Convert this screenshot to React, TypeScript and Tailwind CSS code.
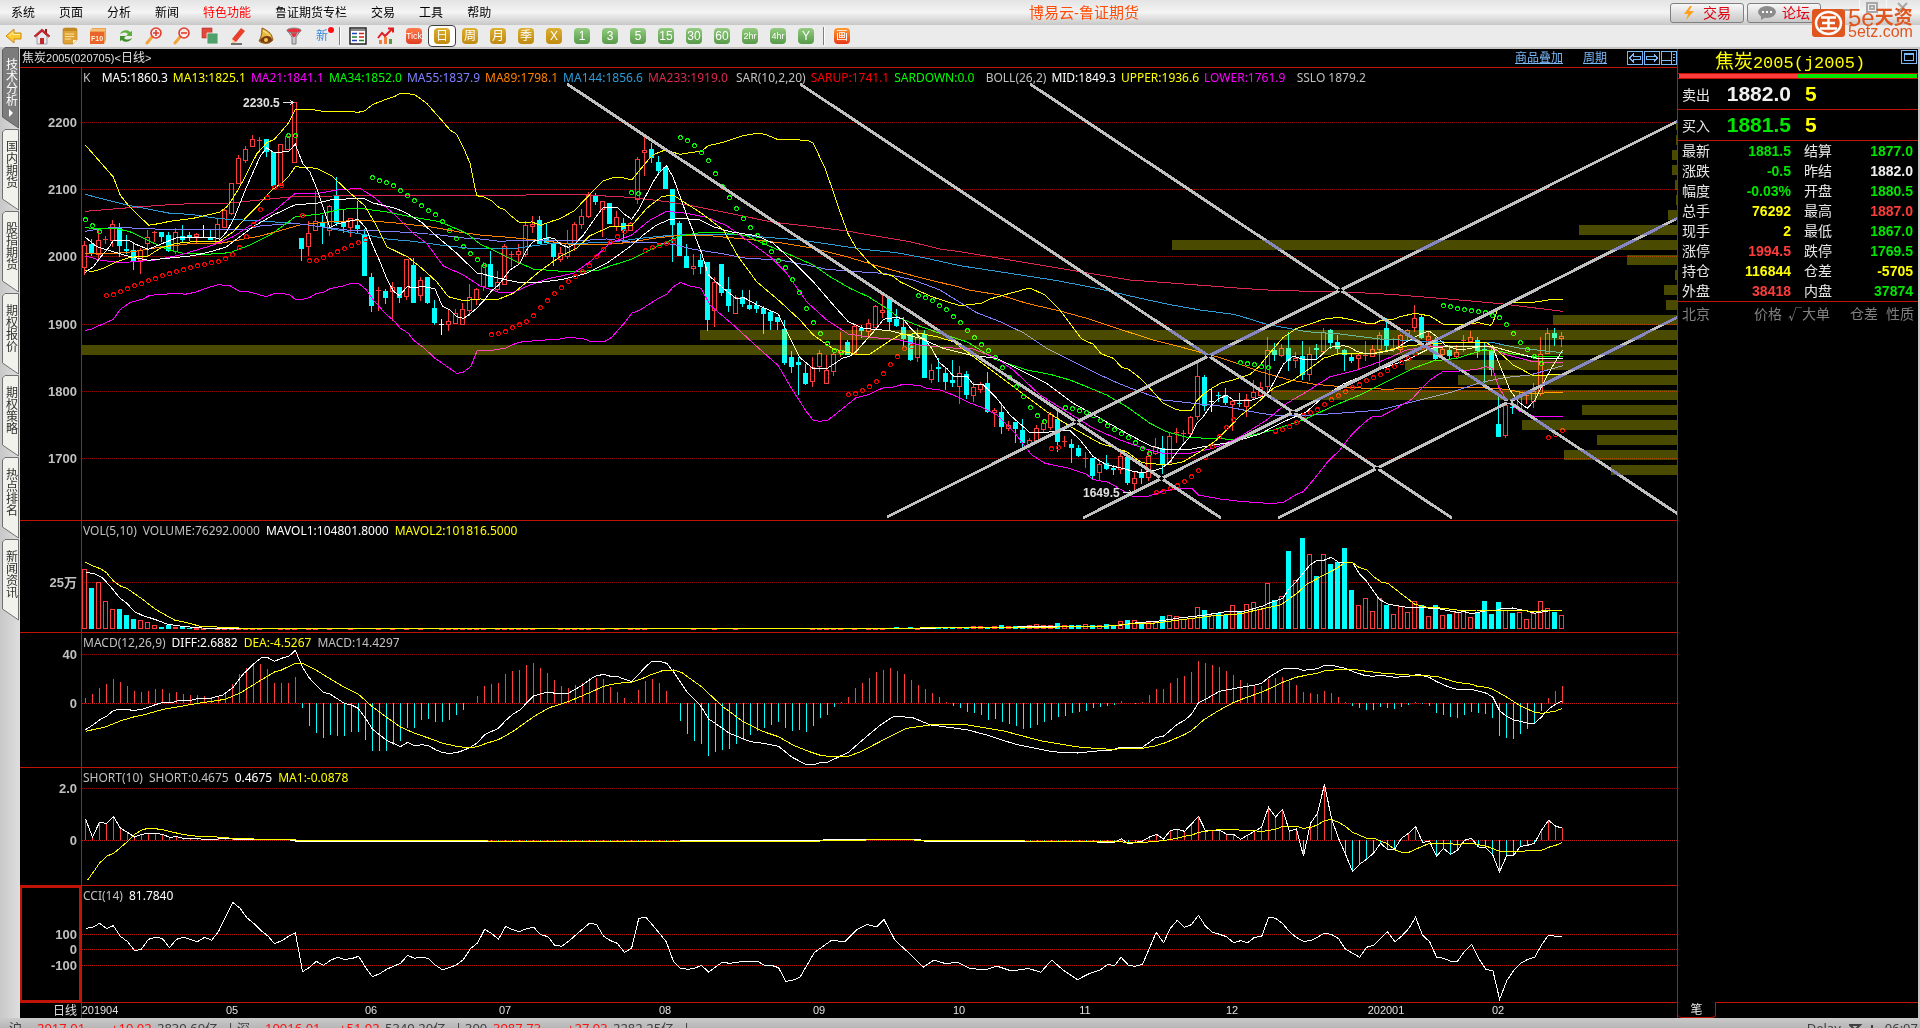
import React from 'react';
import clsx from 'clsx';

type Frame = [number, number, number, number];
type Slice = [Frame, string];

// Series are stored in slices, each with its own origin and scale: [x0, y0, x scale, y scale]
const A: Frame = [80, 80, 3, 3];
const B: Frame = [480, 80, 3, 3];
const C: Frame = [900, 280, 3, 3];
const D: Frame = [1240, 280, 3, 3];
const P: Frame = [80, 520, 1.96, 3];
const O: Frame = [0, 0, 0.8167, 0.8167];
const Q: Frame = [1100, 520, 2.703, 3];
const R: Frame = [0, 880, 1.96, 3];

const PLOT_LEFT = 82;
const STEP = 7;

const trace = (slices: Slice[]) =>
  slices
    .flatMap(([[ox, oy, sx, sy], text]) =>
      text.split(' ').map((pair) => {
        const [x, y] = pair.split(',').map(Number);
        return `${(ox + x / sx).toFixed(1)},${(oy + y / sy).toFixed(1)}`;
      }),
    )
    .join(' ');

// kind high top bottom low
const candleSlices: [Frame, string][] = [
  [
    A,
    'r 483 496 562 585|c 478 492 521 527|r 443 479 521 540|r 468 478 479 493|r 420 433 481 500|c 430 443 497 530|c 465 508 513 522|c 487 510 543 570|r 505 511 539 581|r 450 472 490 528|r 453 457 458 486|c 456 456 471 487|c 456 465 513 517|r 445 457 513 521|c 435 468 479 487|c 456 465 471 484|r 458 461 467 491|w 435 471 473 475|c 450 470 480 481|r 418 433 487 490|r 387 391 442 444|r 309 310 400 404|r 226 235 310 312|r 199 208 241 248|r 165 178 199 201|r 172 181 182 209|c 178 178 217 231|c 216 216 317 319|r 192 193 316 318|r 168 169 208 210|r 67 67 247 247|c 474 474 507 543|r 423 460 499 528|r 333 424 451 453|c 405 430 440 492|r 375 379 451 468|c 291 346 429 438|c 388 430 441 458|r 414 415 440 471|c 362 436 448 458|c 448 465 587 587|c 579 591 677 695|r 621 630 633 692|c 628 633 654 672|r 606 622 634 722|c 621 621 653 669|r 538 538 647 660|c 534 555 668 668|r 591 601 646 663|c 591 591 669 671|c 660 684 728 735|w 717 733 734 765|r 687 724 733 753|r 687 700 730 732|r 670 688 733 735|r 612 652 690 708|r 624 628 657 676|r 546 555 619 632|c 513 552 620 622|r 573 607 626 634|r 493 499 613 615|r 513 522 525 560|r 492 513 523 552|r 424 436 523 530|r 408 432 439 460|c 408 420 491 491|c 430 474 488 490|c 480 490 530 557',
  ],
  [
    B,
    'r 500 520 538 545|r 450 490 529 537|r 427 433 490 512|r 387 409 432 446|r 337 343 409 415|c 340 347 365 375|r 363 364 388 471|c 370 370 431 431|r 393 412 437 452|c 414 430 452 490|r 427 430 451 453|r 231 238 357 372|r 171 211 217 288|c 189 208 234 249|c 228 246 272 285|c 262 262 326 328|c 327 327 434 546|c 424 430 527 527|c 492 528 563 563|r 522 559 565 585|c 522 541 560 582|c 546 546 719 752|r 591 607 691 741|c 552 552 639 647|c 591 627 677 696|r 645 652 700 702|c 630 650 671 681|c 630 675 687 690|c 663 675 687 699|c 679 683 702 762|c 694 695 722 750|c 711 711 725 750|c 720 747 849 855|c 813 831 861 879|c 831 846 855 945|c 852 880 911 914|r 831 862 902 921|r 811 820 859 876|r 825 871 910 912|r 820 822 872 887|r 756 811 816 830|c 780 786 825 826|r 736 739 822 824|c 736 744 753 774|r 717 730 754 775|r 674 679 742 750|r 645 690 696 714|c 651 652 725 750|c 687 717 738 742|c 712 741 776 800|c 763 763 839 842|r 744 770 832 846|c 750 762 893 894|r 852 871 898 909|c 834 861 866 906|c 862 879 906 930|c 840 900 909 921',
  ],
  [
    C,
    'r 258 280 317 371|c 274 282 345 357|r 307 321 345 365|r 307 313 327 340|c 277 309 396 398|r 384 390 396 442|c 368 396 440 462|r 423 435 445 453|c 425 426 447 490|c 417 450 489 501|r 475 480 491 505|r 435 443 481 483|r 420 430 448 460|r 396 402 440 451|c 394 417 486 516|r 468 483 485 500|c 477 492 503 549|c 495 504 528 531|r 516 533 536 564|c 534 534 588 597|r 541 552 575 603|c 526 550 567 570|c 555 564 570 585|r 508 528 566 582|c 522 531 608 615|r 573 594 608 636|c 566 579 594 612|r 510 528 590 603|r 474 502 520 525|c 468 504 556 582|r 460 468 545 547|r 444 457 460 490|r 450 460 462 487|r 408 411 460 468|r 248 289 408 420|c 285 291 377 393|w 327 362 364 396|c 336 345 349 365|c 324 345 369 375|r 356 362 371 453|c 339 369 371 381|r 342 358 377 410|r 300 336 352 360|r 306 321 345 350|r 171 210 318 335|c 189 210 225 243|r 193 205 224 232|c 156 205 242 274|r 216 234 241 265|c 183 228 285 300|r 202 223 283 303|c 192 204 209 240|r 145 157 212 222|c 147 150 188 207|c 165 186 208 222|c 207 210 226 273|c 219 231 243 250|r 219 226 235 269|r 183 224 228 242|r 195 208 227 232|r 156 166 208 262|c 114 144 198 210|r 174 203 207 215|r 163 166 206 217|r 148 151 164 180|r 75 115 142 156|c 105 111 174 177|r 154 168 198 205|c 171 186 237 240|r 198 208 222 237|c 195 210 228 240|r 195 216 228 238|r 165 180 184 216|r 153 171 184 190|c 171 180 213 234|c 186 207 212 310|c 201 211 269 288|c 349 432 470 470|r 366 376 466 474|c 372 382 384 402|r 337 345 385 395|r 340 345 348 372|r 309 332 362 384|r 171 222 338 348|r 144 160 220 222|c 144 159 174 198|r 156 169 173 201',
  ],
];

const candles = candleSlices.flatMap(([[, oy, , sy], text]) =>
  text.split('|').map((row) => {
    const [kind, ...values] = row.split(' ');
    const [high, top, bottom, low] = values.map((v) => Math.round(oy + Number(v) / sy));
    return { kind, high, top, bottom, low };
  }),
);

const colors: Record<string, string> = { r: '#ff3c3c', c: '#00ffff', w: '#ffffff' };

const priceLines: { color: string; slices: Slice[] }[] = [
  {
    // MA233
    color: '#dc2850',
    slices: [
      [A, '16,394 110,386 240,376 350,370 450,369 540,360 640,350 760,348 900,346 1190,346'],
      [B, '0,347 280,343 450,352 560,365 640,378 740,398 880,427 1000,440 1100,453 1200,470 1290,485 1380,507 1440,515'],
      [C, '690,0 800,8 920,17 1010,24'],
      [D, '0,25 120,32 300,35 450,43 600,55 770,70 968,94'],
    ],
  },
  {
    // MA144
    color: '#2c9cd8',
    slices: [
      [A, '16,343 60,355 140,375 200,386 270,400 330,403 420,416 540,423 646,430 720,440 800,455 860,465 920,477 1000,484 1080,495 1160,504'],
      [B, '0,505 100,506 200,492 300,490 400,486 480,475 560,467 640,463 760,463 860,472 960,480 1050,493 1150,508 1250,518 1340,535 1440,557'],
      [C, '460,0 540,15 600,27 700,50 800,72 900,90 1000,103'],
      [D, '0,108 80,133 200,155 300,162 420,177 540,183 660,188 760,188 840,205 968,218'],
    ],
  },
  {
    // MA89
    color: '#ff8000',
    slices: [
      [A, '16,521 100,521 160,515 230,503 320,492 420,490 460,483 540,468 600,452 660,435 750,425 850,421 960,430 1060,442 1150,458'],
      [B, '0,465 100,473 190,482 280,494 360,494 440,488 520,475 600,466 700,468 800,478 900,488 1000,505 1100,530 1200,560 1310,590 1440,622'],
      [C, '200,29 300,45 380,70 480,93 560,115 660,148 760,180 850,203 950,230'],
      [D, '0,253 60,275 150,300 220,312 320,322 440,328 560,323 720,323 800,328 860,340 968,338'],
    ],
  },
  {
    // MA55
    color: '#8080ff',
    slices: [
      [A, '16,454 60,446 110,442 200,446 300,450 400,448 440,450 500,448 540,438 600,433 646,430 720,440 800,450 900,453 1000,458 1080,465 1160,475'],
      [B, '0,477 60,484 120,481 200,480 280,483 380,477 450,486 520,488 580,493 640,508 720,520 800,535 900,540 980,555 1040,568 1130,575 1210,580 1300,600 1380,630'],
      [C, '160,55 230,98 300,125 370,158 440,205 520,245 600,285 660,312 720,335 790,360 900,372 980,380'],
      [D, '0,388 60,400 130,408 220,405 320,398 420,390 480,375 560,355 640,335 720,308 800,292 870,285 968,257'],
    ],
  },
  {
    // MA34
    color: '#00ff00',
    slices: [
      [A, '16,443 60,447 105,445 150,455 205,482 260,507 310,520 380,523 450,518 510,495 570,465 620,430 646,410 720,402 780,388 840,385 920,396 1000,412 1080,425 1160,460'],
      [B, '0,492 60,520 110,545 160,567 260,575 350,572 400,555 455,538 520,505 600,468 660,458 740,459 800,467 860,495 920,520 1000,555 1050,590 1110,625 1165,650 1220,685'],
      [C, '0,115 50,135 120,160 200,185 290,240 380,270 450,283 510,300 560,320 620,345 680,380 750,430 800,455 860,472 920,475 1000,478'],
      [D, '0,475 100,450 190,420 280,378 360,345 440,305 520,265 580,243 650,235 730,210 760,210 820,222 880,230 968,230'],
    ],
  },
  {
    // MA21
    color: '#ff00ff',
    slices: [
      [A, '16,528 60,540 120,548 220,541 300,525 400,495 460,470 520,430 580,395 646,340 710,341 770,330 840,325 880,350 940,400 1000,460 1040,490 1090,558 1150,585 1192,612'],
      [B, '0,618 60,638 100,637 150,615 200,597 280,580 330,545 390,490 455,465 510,420 560,394 620,400 680,412 740,437 800,480 870,530 920,580 980,665 1040,720 1105,762 1170,772 1240,778'],
      [C, '0,180 60,195 140,203 220,207 290,235 340,270 420,345 500,395 580,445 660,480 730,505 790,520 870,520 940,505 1000,480'],
      [D, '0,470 80,420 140,370 200,335 270,290 350,270 420,245 500,210 560,200 740,198 800,225 880,245 968,248'],
    ],
  },
  {
    // BOLL mid
    color: '#ffffff',
    slices: [
      [A, '16,472 50,500 100,515 150,530 205,541 270,534 340,527 400,513 440,500 480,470 520,440 580,405 646,374 710,370 750,360 830,355 855,357 880,369 950,386 980,400 1025,427 1060,460 1130,520 1192,580'],
      [B, '0,580 50,593 110,606 185,606 250,598 320,580 380,550 450,500 490,465 530,435 565,420 600,415 660,420 700,440 750,455 830,467 880,490 940,545 1000,605 1060,675 1105,725 1150,745 1230,752'],
      [C, '0,160 60,175 130,205 210,225 290,235 380,280 440,310 520,370 600,415 680,460 750,497 790,508 870,508 940,495 1010,485'],
      [D, '0,480 60,462 120,430 200,395 250,350 310,312 400,275 500,240 570,205 620,200 760,200 830,220 890,235 968,237'],
    ],
  },
  {
    // MA13
    color: '#ffff00',
    slices: [
      [A, '16,572 40,574 70,565 110,545 150,532 205,528 240,505 290,490 340,485 420,483 460,455 500,410 540,370 575,330 605,310 625,290 646,260 710,265 755,287 800,330 855,378 885,430 920,500 985,532 1025,565 1070,605 1105,650 1150,662'],
      [B, '0,657 55,658 100,640 130,615 180,573 240,530 290,505 330,467 390,440 455,437 500,385 545,350 580,345 610,365 665,400 730,450 775,530 830,605 895,660 960,720 1000,765 1060,807 1125,822 1170,822 1230,782'],
      [C, '0,165 60,160 110,170 160,185 220,230 300,290 380,350 440,395 520,445 600,490 680,515 725,548 800,555 850,545 900,515 950,480 990,440'],
      [D, '0,408 50,370 100,325 160,300 210,265 250,235 300,220 400,220 440,212 500,198 560,192 640,187 740,188 770,210 820,255 880,287 962,283'],
    ],
  },
  {
    // BOLL upper
    color: '#ffff00',
    slices: [
      [A, '16,195 100,291 121,346 150,382 190,420 206,436 235,431 270,424 340,415 395,402 420,396 440,381 455,360 475,328 500,282 530,222 560,188 583,178 605,153 625,130 646,88 690,88 730,94 800,94 835,97 855,92 877,74 915,59 945,49 961,40 1003,43 1040,70 1087,123 1110,150 1130,163 1150,202 1170,250 1190,347 1213,351 1235,363 1256,382 1275,390 1296,410 1318,427 1355,426 1382,436 1420,422'],
      [B, '240,416 283,392 330,343 370,303 395,294 415,292 437,295 455,300 500,245 520,224 555,210 600,223 665,213 685,197 730,187 790,167 832,160 855,163 895,179 935,179 982,181 1000,190 1035,265 1065,350 1080,395 1105,463 1128,503 1165,545 1210,583 1235,586'],
      [C, '0,5 50,30 100,52 180,77 245,70 270,57 330,40 390,24 435,45 480,90 545,177 580,193 603,221 640,235 665,262 685,267 715,290 735,308 790,370 825,387 850,393 875,390 890,362 910,343 935,325 965,308 1000,300 1050,283 1075,262 1110,218 1150,172 1190,145 1230,132 1270,118 1315,112 1350,118 1400,130 1425,130'],
      [D, '420,122 460,118 480,110 525,100 570,108 610,133 680,133 715,128 750,136 758,130 772,90 797,72 825,67 880,67 925,60 968,58'],
    ],
  },
  {
    // BOLL lower
    color: '#ff00ff',
    slices: [
      [A, '16,751 35,747 55,738 100,718 121,688 150,668 188,657 210,646 290,640 315,643 345,637 380,624 415,614 450,617 478,634 500,634 560,650 583,640 627,643 646,658 670,658 690,652 710,640 730,637 750,626 785,619 815,610 835,610 858,628 880,660 920,705 940,720 960,744 985,760 1003,783 1030,802 1065,835 1130,880 1150,877 1172,860 1192,811 1235,811 1275,805 1315,787 1380,781 1440,777'],
      [B, '265,772 310,776 330,784 375,784 395,772 435,727 455,700 480,690 540,652 560,643 580,620 602,607 625,617 663,625 690,675 760,735 820,790 870,835 895,857 935,926 980,996 1000,1021 1020,1024 1043,1021 1080,992 1128,953 1165,944 1210,923 1235,922'],
      [C, '10,313 40,315 60,317 80,325 120,330 165,347 205,367 245,382 290,405 345,460 395,525 435,550 500,563 560,583 577,598 625,607 665,630 700,650 745,649 790,633 830,627 875,625 895,645 960,657 1030,665 1085,668 1105,672 1150,667 1190,643 1210,635 1240,600 1285,543 1320,510 1350,470 1380,440 1400,422'],
      [D, '397,410 425,408 460,390 515,358 545,325 570,300 608,275 660,273 712,268 737,260 757,265 778,325 805,368 840,393 880,409 968,409'],
    ],
  },
  {
    // MA5
    color: '#ffffff',
    slices: [
      [A, '16,577 40,560 60,533 85,505 100,482 145,480 165,492 205,508 260,485 290,473 340,474 400,471 420,478 440,455 462,415 480,370 500,320 540,230 560,203 583,219 627,213 646,193 668,250 690,277 710,325 750,443 770,432 835,418 858,445 880,500 900,545 920,595 940,633 958,647 982,620 1010,624 1025,618 1065,627 1087,678 1110,690 1130,710 1150,715 1165,706 1190,685 1213,660 1235,632 1256,615 1290,570 1318,552 1340,510'],
      [B, '160,484 205,473 222,475 245,495 265,502 285,492 310,465 345,415 370,382 412,382 432,402 455,418 475,390 520,305 540,275 560,257 580,293 620,405 665,520 685,585 730,625 770,657 790,652 832,675 895,702 915,745 938,790 960,833 1000,866 1043,864 1065,850 1087,835 1110,828 1128,815 1150,790 1190,745 1210,718 1250,712'],
      [C, '10,117 30,142 55,168 75,178 95,205 118,248 140,265 160,288 200,288 220,313 250,315 290,355 330,405 370,440 390,458 430,458 470,453 510,452 540,480 580,530 620,555 660,563 700,574 725,578 760,572 785,565 810,545 830,518 850,493 870,470 890,430 910,410 930,380 955,357 980,345 1000,360 1050,362 1080,352 1100,345 1125,300 1150,253 1180,228 1210,238 1250,238 1290,202 1330,197 1350,202 1370,214 1400,222'],
      [D, '420,218 460,210 500,185 545,160 568,153 590,170 615,195 650,208 680,207 720,200 757,198 785,270 810,330 835,365 862,385 885,360 915,300 940,255 968,210'],
    ],
  },
];

// SAR dots: colour, first candle, values
const sarRuns: [string, number, number[]][] = [
  ['#00ff00', 0, [418, 436, 454]],
  ['#ff0000', 3, [646, 643, 634, 625, 616, 610, 601, 595, 586, 580, 574, 568, 562, 556, 553, 547, 544, 535, 523, 502, 469, 433, 388, 352, 322, 316]],
  ['#00ff00', 29, [166, 166]],
  ['#ff0000', 31, [406, 541, 541, 532, 523, 514, 505, 496, 487, 478]],
  ['#00ff00', 41, [292, 301, 307, 316, 331, 346, 361, 376, 391, 403, 424, 451, 475, 499, 520, 538, 556]],
  ['#ff0000', 58, [763, 760, 754, 742, 733, 724, 706, 682, 661, 640, 622, 604, 589, 574, 556, 529, 508, 487, 469, 454]],
  ['#00ff00', 78, [337, 340]],
  ['#ff0000', 80, [511, 502, 496, 490, 484]],
  ['#00ff00', 85, [172, 181, 196, 217, 241, 280, 319, 352, 385, 415, 442, 466, 487, 514, 541, 562, 598, 637, 685, 727, 760, 790, 811, 815]],
  ['#ff0000', 109, [943, 940, 931, 919, 904, 880, 853, 829, 805, 799]],
  ['#00ff00', 119, [646, 652, 661, 676, 688, 709, 727, 751, 772, 793, 811, 832, 862, 892, 919, 949, 982, 1006, 1024]],
  ['#ff0000', 138, [1105, 1102]],
  ['#00ff00', 140, [982, 985, 991, 997, 1006, 1021, 1036, 1048, 1060, 1072, 1087, 1105, 1120]],
  ['#ff0000', 153, [1237, 1234, 1225, 1216, 1204, 1189, 1171, 1132, 1099, 1069, 1042, 1018]],
  ['#00ff00', 165, [847, 850, 853, 859, 862]],
  ['#ff0000', 170, [1052, 1048, 1039, 1027, 1006, 997, 988, 973, 958, 946, 934, 922, 913, 901, 892, 883, 871, 859, 847, 835, 820, 800, 784]],
  ['#00ff00', 194, [676, 679, 685, 688, 691, 694, 697, 706, 712, 733, 760, 787, 808, 829, 850]],
  ['#ff0000', 209, [1072, 1063, 1051]],
];

// Left edge of every volume-profile bar, top to bottom
const profile = [1676, 1676, 1672, 1672, 1675, 1676, 1668, 1579, 1172, 1627, 1675, 1664, 1666, 1553, 700, 82, 1405, 1458, 1271, 1582, 1522, 1597, 1564, 1611];

const trendLines = [
  [567, 84, 1221, 518],
  [800, 84, 1452, 518],
  [1030, 84, 1678, 514],
  [887, 517, 1678, 121],
  [1083, 518, 1678, 218],
  [1278, 518, 1678, 317],
];

const volumeTops = [
  148, 204, 187, 244, 268, 267, 285, 297, 301, 307, 316, 321, 314, 321, 320, 323,
  ...Array(99).fill(324),
  ...[323, 322, 323, 322, 323, 322, 321, 322, 320, 321, 320, 321, 319, 318, 320, 318, 316, 318, 317, 318, 315, 313, 316, 314, 308, 315, 314, 316, 312, 315],
  ...[314, 312, 318, 303, 300, 300, 310, 306, 306, 288, 286, 289, 296, 294, 262, 270, 284, 278, 284, 256, 275, 252, 247, 268, 190, 241, 229, 93, 181, 54, 103, 168, 103, 132, 126, 84, 210, 256, 235, 274, 235, 255, 283, 259, 277, 244, 256, 289, 255, 286, 282, 277, 270, 292, 277, 243, 282, 246, 270, 279, 277, 298, 280, 244, 265, 275, 286],
];

const macdBars = [
  534, 522, 504, 492, 477, 487, 498, 513, 516, 513, 507, 507, 519, 516, 521, 525, 525, 528, 532, 530, 516, 492, 462, 444, 432, 432, 447, 489, 489, 489, 471,
  564, 618, 639, 654, 645, 648, 648, 636, 636, 660, 693, 693, 693, 675, 663, 624, 624, 600, 597, 606, 606, 600, 585, 570, 550,
  528, 498, 492, 489, 462, 453, 450, 435, 429, 444, 459, 480, 498, 504, 495, 489, 473, 474, 477, 501, 516, 534, 546, 510, 483, 477, 489, 513, 549,
  603, 642, 663, 672, 708, 696, 690, 687, 672, 660, 645, 633, 624, 615, 606, 624, 633, 630, 636, 618, 594, 585, 561, 547,
  531, 504, 489, 474, 456, 449, 445, 452, 462, 480, 495, 508, 520, 532, 545, 558, 565, 575, 580, 585, 600, 598, 605, 612, 618, 628, 625, 615, 605, 600, 592, 588, 580, 575, 572, 565,
  560, 557, 555, 543, 548, 552, 546, 525, 507, 507, 489, 474, 468, 456, 423, 430, 435, 441, 453, 465, 480, 489, 495, 498, 477, 474, 471, 482, 495, 516, 519, 522, 513, 519, 531, 546,
  558, 564, 570, 570, 561, 564, 567, 561, 555, 546, 552, 558, 579, 585, 591, 594, 585, 576, 579, 582, 594, 648, 654, 657, 642, 627, 609, 573, 534, 513, 498,
];

const shortValues = [
  897, 951, 907, 910, 890, 925, 937, 951, 943, 940, 940, 943, 952, 950, 955, 955, 956, 958, 958, 957, 955, 957,
  ...Array(8).fill(959),
  ...Array(56).fill(963),
  ...Array(20).fill(962),
  ...Array(14).fill(957),
  ...Array(25).fill(965),
  ...[967, 967, 967, 956, 972, 967, 963, 951, 943, 957, 931, 928, 934, 912, 889, 932, 931, 930, 943, 943, 958, 946, 934, 922, 862, 891, 868, 934, 927, 1009, 910, 880, 793, 896, 955, 1003, 1054, 1033, 1018, 1000, 970, 988, 988, 955, 940, 919, 967, 964, 1009, 985, 1003, 991, 961, 955, 981, 983, 1003, 1056, 1008, 1006, 979, 976, 970, 931, 901, 918, 925],
];

const volumeLines: { color: string; slices: Slice[] }[] = [
  {
    color: '#ffffff',
    slices: [
      [P, '11,157 30,162 45,175 60,200 78,234 92,250 107,275 122,286 150,300 170,312 200,319 240,324 300,326 1568,326'],
      [Q, '0,318 40,318 100,308 160,303 220,293 280,286 340,275 380,276 400,271 440,258 460,248 494,235 510,208 530,185 568,135 587,121 605,121 625,112 645,127 683,128 700,160 720,183 755,238 780,253 830,262 910,265 965,277 985,275 1005,281 1045,272 1065,273 1085,266 1115,264 1150,272 1175,280 1210,273 1250,272'],
    ],
  },
  {
    color: '#ffff00',
    slices: [
      [P, '11,127 25,138 40,146 52,158 66,184 80,199 92,205 120,235 148,268 185,300 215,310 235,319 300,323 340,326 1568,325'],
      [Q, '0,320 80,312 150,309 230,298 300,288 380,281 440,266 490,254 515,233 530,222 560,192 605,165 640,145 663,127 683,128 700,142 720,149 740,170 760,186 778,190 850,252 880,261 930,265 970,271 1020,270 1130,271 1180,275 1210,270 1250,271'],
    ],
  },
];

const macdLines: { color: string; slices: Slice[] }[] = [
  {
    color: '#ffffff',
    slices: [
      [P, '11,629 25,615 38,600 52,589 66,571 80,568 107,571 122,568 150,553 163,547 180,549 190,543 220,540 235,534 258,534 280,525 300,502 320,462 340,432 355,414 367,412 381,424 395,415 410,408 422,391 436,441 450,475 477,517 490,522 518,550 532,555 545,565 560,595 573,627 600,660 628,680 642,667 656,677 670,674 683,677 697,689 711,698 725,700 738,698 752,691 766,681 780,667 793,644 820,625 834,602 848,583 862,570 889,528 916,516 940,522 957,520 985,495 1003,475 1012,468 1026,463 1040,469 1052,469 1081,485 1095,463 1108,441 1121,424 1135,424 1150,430 1163,455 1190,516 1218,560 1232,597 1245,610 1273,640 1314,665 1340,670 1369,679 1396,712 1424,734 1437,734 1451,728 1465,727 1506,697 1530,665 1568,616'],
      [O, '730,585 745,586 760,592 790,596 805,600 830,608 860,614 880,615'],
      [Q, '0,692 30,691 55,682 75,684 115,682 152,652 170,650 209,613 230,600 247,583 266,549 290,535 323,514 360,506 415,496 437,490 455,473 475,459 494,447 530,445 550,451 587,446 606,436 625,436 660,444 685,455 715,466 735,469 760,466 797,472 835,469 860,463 890,472 910,485 945,502 965,508 1005,508 1045,520 1062,532 1080,572 1100,590 1118,600 1137,604 1156,610 1175,610 1194,590 1212,568 1232,552 1250,542'],
    ],
  },
  {
    color: '#ffff00',
    slices: [
      [P, '11,634 50,621 80,602 107,590 122,586 163,568 190,561 235,549 285,538 315,518 355,480 381,456 395,450 422,430 436,430 462,450 518,502 545,522 573,560 600,591 628,621 656,640 683,654 711,670 738,679 766,684 780,679 800,668 820,659 848,635 889,590 920,563 957,545 1003,515 1026,499 1052,490 1081,487 1100,477 1121,463 1140,453 1163,450 1180,458 1218,500 1260,560 1300,605 1340,635 1369,650 1400,677 1430,695 1451,706 1479,711 1506,709 1530,695 1568,665'],
      [O, '740,595 760,592 790,592 820,597 850,605 880,610'],
      [Q, '0,686 30,688 80,685 115,685 152,677 180,667 230,643 247,632 280,600 320,572 360,548 390,535 440,515 475,497 494,487 530,472 570,463 587,460 606,453 640,449 685,448 720,454 760,459 835,465 910,469 940,479 965,487 1005,493 1020,499 1045,502 1062,508 1100,532 1137,558 1175,577 1194,580 1230,574 1250,565'],
    ],
  },
];

const shortAverage: Slice[] = [
  [P, '15,1080 28,1052 38,1030 52,1009 66,1000 92,966 107,943 120,931 133,925 160,928 175,934 200,943 230,949 260,950 300,955 380,959 520,962 800,963 1200,963 1450,963 1568,959'],
  [Q, '0,965 120,967 170,962 209,955 228,949 247,946 266,937 320,929 360,929 440,934 475,928 494,919 530,919 550,925 570,922 587,915 606,902 625,898 645,907 663,919 683,937 702,946 721,955 740,955 775,970 800,991 815,997 835,997 890,970 930,970 965,973 1005,970 1045,979 1080,994 1130,994 1194,991 1215,981 1232,976 1250,967'],
];

const cciLine: Slice[] = [
  [R, '168,145 182,142 195,130 209,146 222,137 236,169 250,185 264,212 277,208 291,178 305,172 318,175 332,203 346,178 360,172 374,179 387,185 401,172 415,181 428,155 442,110 456,67 470,84 484,113 497,130 511,151 525,168 538,191 552,182 566,169 579,159 593,275 607,262 620,244 634,256 648,241 661,232 675,238 689,236 703,229 717,263 730,290 744,281 758,268 771,259 785,250 799,226 812,235 826,232 840,235 853,255 867,269 881,263 895,254 908,239 922,206 936,189 950,148 964,161 977,178 991,139 1005,149 1018,155 1032,146 1046,142 1060,164 1074,170 1087,196 1101,199 1115,183 1128,166 1155,130 1169,133 1183,169 1197,182 1210,190 1224,217 1238,205 1252,115 1266,112 1280,137 1306,185 1320,245 1334,265 1348,268 1361,265 1375,256 1389,277 1403,260 1416,247 1430,250 1460,244 1485,244 1498,256 1512,256 1526,263 1540,304 1553,301 1568,292'],
  [O, '665,778 679,768 690,769 700,759 708,755 716,757 722,751 731,768 742,778 754,790 763,784 772,787 782,786 792,791 805,792 814,789 826,793 840,791 850,794 859,784 868,792 880,800 890,795'],
  [Q, '0,1350 20,1334 40,1336 57,1312 77,1336 95,1339 115,1333 152,1237 172,1268 190,1225 209,1201 228,1222 247,1214 266,1186 285,1218 304,1237 323,1243 342,1250 361,1268 380,1262 399,1268 418,1252 437,1249 456,1192 475,1195 494,1211 512,1235 530,1252 550,1264 569,1262 587,1252 606,1240 625,1243 645,1256 663,1287 702,1312 720,1282 740,1276 777,1235 797,1265 815,1249 835,1225 853,1192 872,1246 891,1265 910,1312 929,1315 948,1324 966,1324 985,1295 1005,1273 1023,1315 1043,1348 1062,1352 1080,1438 1100,1381 1118,1352 1137,1330 1156,1318 1175,1312 1194,1274 1212,1246 1232,1249 1250,1249'],
];

const menu = ['系统', '页面', '分析', '新闻', '特色功能', '鲁证期货专栏', '交易', '工具', '帮助'];

const sideTabs = ['技术分析', '国内期货', '股指期货', '期权报价', '期权策略', '热点排名', '新闻资讯'];

const quotes = [
  ['最新', '1881.5', 'text-[#00e600]', '结算', '1877.0', 'text-[#00e600]'],
  ['涨跌', '-0.5', 'text-[#00e600]', '昨结', '1882.0', 'text-[#f0f0f0]'],
  ['幅度', '-0.03%', 'text-[#00e600]', '开盘', '1880.5', 'text-[#00e600]'],
  ['总手', '76292', 'text-[#ffff00]', '最高', '1887.0', 'text-[#ff3c3c]'],
  ['现手', '2', 'text-[#ffff00]', '最低', '1867.0', 'text-[#00e600]'],
  ['涨停', '1994.5', 'text-[#ff3c3c]', '跌停', '1769.5', 'text-[#00e600]'],
  ['持仓', '116844', 'text-[#ffff00]', '仓差', '-5705', 'text-[#ffff00]'],
  ['外盘', '38418', 'text-[#ff3c3c]', '内盘', '37874', 'text-[#00e600]'],
];

const indexes = [
  ['沪', '2917.01', '+10.02', '2839.60亿'],
  ['深', '10916.01', '+51.92', '5349.20亿'],
  ['300', '3987.73', '+27.93', '2282.25亿'],
];

const dates: [number, string][] = [
  [100, '201904'],
  [232, '05'],
  [371, '06'],
  [505, '07'],
  [665, '08'],
  [819, '09'],
  [959, '10'],
  [1085, '11'],
  [1232, '12'],
  [1386, '202001'],
  [1498, '02'],
];

function ToolIcon({ name }: { name: string }) {
  const common = { width: 18, height: 18, viewBox: '0 0 18 18', 'aria-hidden': true } as const;
  switch (name) {
    case '后退':
      return (
        <svg {...common}>
          <path d="M1 9l8-7v4h7v6H9v4z" fill="#ffc933" stroke="#c98a10" />
          <path d="M4 9l4-3.500v2h7" fill="none" stroke="#fff0a8" />
        </svg>
      );
    case '首页':
      return (
        <svg {...common}>
          <path d="M4 9v8h10V9L9 4z" fill="#e9e9ec" stroke="#9a9aa4" />
          <path d="M12 2h2v5h-2z" fill="#8e2020" />
          <path d="M1 9l8-7 8 7-1.500 1L9 4.500 2.500 10z" fill="#d8232a" stroke="#8e1414" strokeWidth=".6" />
          <path d="M7 11h4v6H7z" fill="#c0282c" />
        </svg>
      );
    case '笔记':
      return (
        <svg {...common}>
          <path d="M2 2l2-1h10l2 1v11l-4 4H3l-1-1z" fill="#dfa238" stroke="#b47a18" strokeWidth=".6" />
          <path d="M2 2l2-1h10l2 1v2H2z" fill="#c48820" />
          <path d="M4 7h9M4 9.500h9M4 12h6" stroke="#fbe3a6" />
          <path d="M16 13h-4v4z" fill="#fff0c0" />
        </svg>
      );
    case 'F10':
      return (
        <svg {...common}>
          <path d="M1 4l2-3h14v12l-2 4H1z" fill="#f0a04c" />
          <path d="M1 5h14v12H1z" fill="#e8642a" />
          <path d="M2 3h14" stroke="#fbe0b0" />
          <text x="2" y="14" fontSize="7" fontWeight="700" fill="#fff4dc" fontFamily="Liberation Sans, sans-serif">
            F10
          </text>
        </svg>
      );
    case '刷新':
      return (
        <svg {...common}>
          <path d="M3 7c1-4 8-5 10-2l2-1v5H9l2-2C9 5 6 5 3 7z" fill="#5fae3c" />
          <path d="M15 11c-1 4-8 5-10 2l-2 1V9h6l-2 2c2 2 5 2 8 0z" fill="#3f8f2a" />
        </svg>
      );
    case '放大':
    case '缩小':
      return (
        <svg {...common}>
          <path d="M7 10l-5 6" stroke="#f2a53a" strokeWidth="3" strokeLinecap="round" />
          <circle cx="11" cy="6" r="5" fill="#fbe9e6" stroke="#e03c30" strokeWidth="1.600" />
          <path d={name === '放大' ? 'M8 6h6M11 3v6' : 'M8 6h6'} stroke="#e03c30" strokeWidth="1.600" />
        </svg>
      );
    case '叠加':
      return (
        <svg {...common}>
          <path d="M1 1h10v10H1z" fill="#e04a3c" stroke="#a82a20" strokeWidth=".6" />
          <path d="M6 6h11v11H6z" fill="#4fa06a" stroke="#f4f4f4" strokeWidth=".8" />
        </svg>
      );
    case '画笔':
      return (
        <svg {...common}>
          <path d="M3 12L12 1l4 3-9 11-4 1z" fill="#e8402c" />
          <path d="M3 12l4 3-4 1z" fill="#f7d9a8" />
          <path d="M2 17h11" stroke="#4a4a4a" strokeWidth="1.500" />
        </svg>
      );
    case '预警':
      return (
        <svg {...common}>
          <path d="M5 1c5 2 10 6 10 9l1 3-4 3c-4 1-8 0-10-2 2-3 3-7 3-13z" fill="#eab840" stroke="#8a5610" />
          <path d="M3 13c1-2 4-4 7-4s5 2 5 4-3 3-6 3-6-1-6-3z" fill="#7a3c10" />
          <path d="M6 4c3 1 5 3 7 5" stroke="#fff0a0" fill="none" />
          <circle cx="9" cy="13" r="2" fill="#f0c850" />
        </svg>
      );
    case '筛选':
      return (
        <svg {...common}>
          <path d="M2 3l5 7v7h4v-7l5-7z" fill="#c8c8cc" stroke="#7c7c84" />
          <path d="M5 5h8l-3 5H8z" fill="#e8303c" />
          <ellipse cx="9" cy="3.500" rx="7" ry="2.500" fill="#e8303c" stroke="#8c8c94" />
        </svg>
      );
    case '报价':
      return (
        <svg {...common}>
          <path d="M1 1h16v16H1z" fill="#fff" stroke="#222" strokeWidth="1.500" />
          <path d="M2 3h14" stroke="#8a8a8a" strokeWidth="2" />
          <path d="M3 6.500h5M3 13.500h5" stroke="#2040c0" strokeWidth="1.500" />
          <path d="M3 10h5M10 13.500h5" stroke="#208030" strokeWidth="1.500" />
          <path d="M10 6.500h5M10 10h5" stroke="#d02020" strokeWidth="1.500" />
        </svg>
      );
    default:
      return (
        <svg {...common}>
          <path d="M2 13h3v4H2zM7 10h3v7H7z" fill="#f0803c" />
          <path d="M12 12h3v5h-3z" fill="#5a9a3c" />
          <path d="M1 11l4-5 3 3 7-7M11 1.500h5v4" fill="none" stroke="#e02020" strokeWidth="2" />
        </svg>
      );
  }
}

const tools = ['后退', '首页', '笔记', 'F10', '刷新', '放大', '缩小', '叠加', '画笔', '预警', '筛选'];

function PeriodButton({ text, tone, selected }: { text: string; tone: string; selected?: boolean }) {
  return (
    <button
      className={clsx(
        'flex h-[22px] w-7 items-center justify-center',
        selected && 'rounded border border-[#404040] bg-white',
      )}
    >
      <span
        className={clsx(
          'flex h-4 w-4 items-center justify-center rounded-sm bg-gradient-to-b font-[Liberation_Sans,Noto_Sans_CJK_SC,sans-serif] leading-none text-white',
          text.length > 2 ? 'text-[9px]' : 'text-[12px]',
          tone === 'gold' && 'from-[#dcb030] to-[#c08a10]',
          tone === 'green' && 'from-[#94cc80] to-[#569a48]',
          tone === 'red' && 'from-[#ff7a4c] to-[#e03c20]',
          tone === 'orange' && 'from-[#ff9a30] to-[#e83418]',
        )}
      >
        {text}
      </span>
    </button>
  );
}

function Divider() {
  return <span className="mx-[3px] mt-0.5 h-[18px] w-0.5 border-l border-[#808080] bg-white" />;
}

function Legend({ items, className }: { items: [string, string][]; className?: string }) {
  return (
    <div className={clsx('absolute left-px flex text-[12px] leading-4 whitespace-pre', className)}>
      {items.map(([text, color]) => (
        <span key={text} className={color}>
          {text}
        </span>
      ))}
    </div>
  );
}

interface PanelProps {
  top: number;
  size: string;
  ticks: [number, string][];
  grid: [number, string][];
  legend: [string, string][];
  legendClass?: string;
  selected?: boolean;
  children: React.ReactNode;
}

function Panel({ top, size, ticks, grid, legend, legendClass = 'top-0.5 gap-1.5', selected, children }: PanelProps) {
  return (
    <div className={clsx('flex border-b border-[#c01408]', size)}>
      <svg className={clsx('h-full w-[61px] shrink-0', selected && 'border-2 border-[#c01408]')}>
        {ticks.map(([y, text]) => (
          <text
            key={text}
            x={selected ? 55 : 57}
            y={y - top + (selected ? 3 : 5)}
            textAnchor="end"
            fill="#c0c0c0"
            className="font-[Liberation_Sans,Noto_Sans_CJK_SC,sans-serif] text-[13px] font-bold"
          >
            {text}
          </text>
        ))}
      </svg>
      <div className="relative min-w-0 flex-1 border-l border-[#c01408]">
        <svg className="block h-full w-full" shapeRendering="crispEdges">
          <g transform={`translate(${-PLOT_LEFT} ${-top})`}>
            {grid.map(([y, color]) => (
              <line key={y} x1={82} x2={1677} y1={y + 0.5} y2={y + 0.5} stroke={color} strokeDasharray="1 1" />
            ))}
            {children}
          </g>
        </svg>
        <Legend items={legend} className={legendClass} />
      </div>
    </div>
  );
}

function Line({ slices, color }: { slices: Slice[]; color: string }) {
  return <polyline points={trace(slices)} fill="none" stroke={color} />;
}

function PriceChart() {
  return (
    <>
      {candles.map(({ kind, high, top, bottom, low }, i) => {
        const x = 84 + STEP * i;
        const height = Math.max(1, bottom - top);
        return (
          <g key={i}>
            <rect x={x} y={high} width={1} height={Math.max(0, top - high)} fill={colors[kind]} />
            <rect x={x} y={bottom} width={1} height={Math.max(0, low - bottom)} fill={colors[kind]} />
            {kind === 'r' && height > 1 ? (
              <rect x={x - 1.5} y={top + 0.5} width={4} height={height} fill="none" stroke={colors.r} />
            ) : (
              <rect x={x - 2} y={top} width={5} height={height} fill={colors[kind]} />
            )}
          </g>
        );
      })}
      {priceLines.map(({ color, slices }, i) => (
        <Line key={i} color={color} slices={slices} />
      ))}
      {sarRuns.map(([color, start, values]) =>
        values.map((v, i) => (
          <circle
            key={`${start}-${i}`}
            cx={85.5 + STEP * (start + i)}
            cy={80.5 + v / 3}
            r={2}
            fill="none"
            stroke={color}
          />
        )),
      )}
      <g fill="#ffff00" opacity={0.29}>
        {profile.map((x, i) => (
          <rect key={i} x={x} y={120 + 15 * i} width={1677 - x} height={10} />
        ))}
      </g>
      <clipPath id="profile">
        {profile.map((x, i) => (
          <rect key={i} x={x} y={120 + 15 * i} width={1677 - x} height={10} />
        ))}
      </clipPath>
      <g className="isolate" strokeWidth={3}>
        {trendLines.map(([x1, y1, x2, y2]) => (
          <line key={x1} x1={x1} y1={y1} x2={x2} y2={y2} stroke="#c0c0c0" className="mix-blend-difference" />
        ))}
      </g>
      <g strokeWidth={3} clipPath="url(#profile)">
        {trendLines.map(([x1, y1, x2, y2]) => (
          <line key={x1} x1={x1} y1={y1} x2={x2} y2={y2} stroke="#8888c0" />
        ))}
      </g>
      <g fill="#e0e0e0" className="font-[Liberation_Sans,sans-serif] text-[12px] font-bold">
        <text x={243} y={107}>
          2230.5
        </text>
        <text x={1083} y={497}>
          1649.5
        </text>
      </g>
      <path d="M283 102.500h10m-3-2.500l3 2.500-3 2.500M1123 492.500h8m-2-2l3 2-3 2" fill="none" stroke="#e0e0e0" />
    </>
  );
}

function VolumeChart() {
  return (
    <>
      {volumeTops.map((v, i) => {
        const y = Math.round(520 + v / 3);
        const x = 84 + STEP * i;
        return candles[i].kind === 'c' ? (
          <rect key={i} x={x - 2} y={y} width={5} height={629 - y} fill="#00ffff" />
        ) : (
          <rect key={i} x={x - 1.5} y={y + 0.5} width={4} height={Math.max(0.5, 628 - y)} fill="none" stroke="#ff3c3c" />
        );
      })}
      {volumeLines.map((line) => (
        <Line key={line.color} {...line} />
      ))}
    </>
  );
}

function Sticks({ values, base }: { values: number[]; base: number }) {
  return (
    <>
      {values.map((v, i) => {
        const y = 520 + v / 3;
        return (
          <rect
            key={i}
            x={85 + STEP * i}
            y={Math.round(Math.min(y, base))}
            width={1}
            height={Math.round(Math.abs(base - y))}
            fill={y < base ? '#ff3c3c' : '#00ffff'}
          />
        );
      })}
    </>
  );
}

function ChartArea() {
  const shortLine = shortValues.map((v, i) => `${85.5 + STEP * i},${(520 + v / 3).toFixed(1)}`).join(' ');
  return (
    <main className="min-w-0 flex-1 border-r border-[#c01408] bg-black">
      <div className="flex h-[19px] items-center border-b border-[#c01408] text-[12px] leading-none text-[#e0e0e0]">
        <h1 className="flex items-baseline pl-0.5">
          焦炭
          <span className="font-[Liberation_Sans,sans-serif] text-[11px]">2005(020705)&lt;</span>
          日线
          <span className="font-[Liberation_Sans,sans-serif] text-[11px]">&gt;</span>
        </h1>
        <div className="ml-auto flex items-center gap-5 text-[#7ab8f8]">
          <a href="#overlay" className="underline">
            商品叠加
          </a>
          <a href="#period" className="underline">
            周期
          </a>
          <div className="flex gap-px">
            {[
              'M2.500 7L6 3.500v2h7.500v3H6v2z',
              'M13.500 7L10 3.500v2H2.500v3H10v2z',
              'M0 9.500h10.500M10.500 0v14M12 3.500h2M12 6.500h2M12 9.500h2',
            ].map((d, i) => (
              <button key={d} aria-label={['前移', '后移', '布局'][i]} className="h-[14px] w-4">
                <svg width="16" height="14" fill="none" stroke="currentColor" shapeRendering="crispEdges" aria-hidden="true">
                  <path d="M.5.5h15v13H.5z" />
                  <path d={d} />
                </svg>
              </button>
            ))}
          </div>
        </div>
      </div>
      <Panel
        top={68}
        size="h-[453px]"
        ticks={[
          [122, '2200'],
          [189, '2100'],
          [256, '2000'],
          [324, '1900'],
          [391, '1800'],
          [458, '1700'],
        ]}
        grid={[
          [122, '#900000'],
          [189, '#900000'],
          [256, '#900000'],
          [324, '#900000'],
          [391, '#900000'],
          [458, '#900000'],
        ]}
        legendClass="top-0.5 gap-[5px]"
        legend={[
          ['K  ', 'text-[#c0c0c0]'],
          ['MA5:1860.3', 'text-white'],
          ['MA13:1825.1', 'text-[#ffff00]'],
          ['MA21:1841.1', 'text-[#ff00ff]'],
          ['MA34:1852.0', 'text-[#00ff00]'],
          ['MA55:1837.9', 'text-[#8080ff]'],
          ['MA89:1798.1', 'text-[#ff8000]'],
          ['MA144:1856.6', 'text-[#2c9cd8]'],
          ['MA233:1919.0 ', 'text-[#dc2850]'],
          ['SAR(10,2,20)', 'text-[#c0c0c0]'],
          ['SARUP:1741.1', 'text-[#ff0000]'],
          ['SARDOWN:0.0  ', 'text-[#00ff00]'],
          ['BOLL(26,2)', 'text-[#c0c0c0]'],
          ['MID:1849.3', 'text-white'],
          ['UPPER:1936.6', 'text-[#ffff00]'],
          ['LOWER:1761.9  ', 'text-[#ff00ff]'],
          ['SSLO 1879.2', 'text-[#c0c0c0]'],
        ]}
      >
        <PriceChart />
      </Panel>
      <Panel
        top={521}
        size="h-[112px]"
        ticks={[[582, '25万']]}
        grid={[[582, '#900000']]}
        legend={[
          ['VOL(5,10)', 'text-[#c0c0c0]'],
          ['VOLUME:76292.0000', 'text-[#c0c0c0]'],
          ['MAVOL1:104801.8000', 'text-white'],
          ['MAVOL2:101816.5000', 'text-[#ffff00]'],
        ]}
      >
        <VolumeChart />
      </Panel>
      <Panel
        top={633}
        size="h-[135px]"
        ticks={[
          [654, '40'],
          [703, '0'],
        ]}
        grid={[
          [654, '#900000'],
          [703, '#d01818'],
        ]}
        legend={[
          ['MACD(12,26,9)', 'text-[#c0c0c0]'],
          ['DIFF:2.6882', 'text-white'],
          ['DEA:-4.5267', 'text-[#ffff00]'],
          ['MACD:14.4297', 'text-[#c0c0c0]'],
        ]}
      >
        <Sticks values={macdBars} base={703} />
        {macdLines.map((line) => (
          <Line key={line.color} {...line} />
        ))}
      </Panel>
      <Panel
        top={768}
        size="h-[118px]"
        ticks={[
          [788, '2.0'],
          [840, '0'],
        ]}
        grid={[
          [788, '#900000'],
          [840, '#d01818'],
        ]}
        legend={[
          ['SHORT(10)', 'text-[#c0c0c0]'],
          ['SHORT:0.4675', 'text-[#c0c0c0]'],
          ['0.4675', 'text-white'],
          ['MA1:-0.0878', 'text-[#ffff00]'],
        ]}
      >
        <Sticks values={shortValues} base={840} />
        <polyline points={shortLine} fill="none" stroke="#ffffff" />
        <Line slices={shortAverage} color="#ffff00" />
      </Panel>
      <Panel
        top={886}
        size="h-[117px]"
        selected
        ticks={[
          [934, '100'],
          [949, '0'],
          [965, '-100'],
        ]}
        grid={[
          [934, '#c01408'],
          [949, '#c01408'],
          [965, '#c01408'],
        ]}
        legend={[
          ['CCI(14)', 'text-[#c0c0c0]'],
          ['81.7840', 'text-white'],
        ]}
      >
        <Line slices={cciLine} color="#ffffff" />
      </Panel>
      <div className="flex h-[15px] text-[12px] leading-[15px] text-[#e0e0e0]">
        <span className="w-[61px] pr-1 text-right">日线</span>
        <svg className="h-full min-w-0 flex-1 border-l border-[#c01408]">
          <g transform={`translate(${-PLOT_LEFT} 0)`} fill="#e0e0e0" textAnchor="middle">
            {dates.map(([x, text]) => (
              <text key={text} x={x} y={11} className="font-[Liberation_Sans,sans-serif] text-[11px]">
                {text}
              </text>
            ))}
          </g>
        </svg>
      </div>
    </main>
  );
}

function QuotePanel() {
  return (
    <aside className="flex w-[242px] shrink-0 flex-col border-r-2 border-[#c8c4c2] bg-black text-[14px] text-[#e8e8e8]">
      <div className="relative flex h-6 items-center justify-center pt-0.5 pr-4 text-[#ffff00]">
        <h2 className="flex items-baseline text-[19px] leading-6">
          焦炭<span className="font-[Liberation_Mono,monospace] text-[17px]">2005(j2005)</span>
        </h2>
        <button aria-label="最大化" className="absolute top-px right-px h-[14px] w-4 border border-[#7ab8f8] p-[2px]">
          <span className="block h-full w-full border border-t-2 border-[#7ab8f8]" />
        </button>
      </div>
      <div className="flex h-[6px] border-y border-[#c01408]">
        <span className="ml-px flex-1 bg-[#ff3c3c]" />
        <span className="mr-px flex-1 bg-[#00e600]" />
      </div>
      {[
        ['卖出', '1882.0', 'text-[#f0f0f0]'],
        ['买入', '1881.5', 'text-[#00e600]'],
      ].map(([label, value, color]) => (
        <div key={label} className="flex h-[31px] items-center border-b border-[#c01408] pl-1">
          <span className="w-[43px]">{label}</span>
          <span
            className={clsx('w-[66px] text-right font-[Liberation_Sans,sans-serif] text-[21px] font-bold', color)}
          >
            {value}
          </span>
          <span className="pl-[14px] font-[Liberation_Sans,sans-serif] text-[21px] font-bold text-[#ffff00]">5</span>
        </div>
      ))}
      <table className="w-full border-b border-[#c01408] leading-5">
        <tbody>
          {quotes.map(([label, value, color, label2, value2, color2]) => (
            <tr key={label} className="h-5">
              <th className="w-11 pl-1 text-left font-normal">{label}</th>
              <td className={clsx('w-[69px] text-right font-[Liberation_Sans,sans-serif] font-bold', color)}>{value}</td>
              <th className="w-11 pl-[13px] text-left font-normal">{label2}</th>
              <td className={clsx('pr-[5px] text-right font-[Liberation_Sans,sans-serif] font-bold', color2)}>
                {value2}
              </td>
            </tr>
          ))}
        </tbody>
      </table>
      <div className="flex h-[22px] items-center pr-1 pl-1 text-[#808080]">
        <span>北京</span>
        <span className="ml-auto">价格</span>
        <span className="ml-[6px]">√大单</span>
        <span className="ml-5">仓差</span>
        <span className="ml-2">性质</span>
      </div>
      <div className="mt-auto flex h-4">
        <button className="h-4 w-[38px] rounded-b-sm border-r border-b border-[#c01408] text-[12px] leading-3">笔</button>
        <span className="flex-1 border-t border-[#c01408]" />
      </div>
    </aside>
  );
}

function SideTabs() {
  return (
    <nav className="relative -mt-0.5 w-5 shrink-0 bg-gradient-to-r from-[#c8c8c8] to-[#dedede] pl-[2px]">
      {sideTabs.map((label, i) => (
        <button
          key={label}
          className={clsx(
            'relative flex h-[82px] w-4 items-start justify-center pt-[11px] pl-px text-left text-[12px] leading-4',
            i === 0 ? 'text-white' : 'text-[#303030]',
          )}
        >
          <svg className="absolute inset-0" width="17" height="82" aria-hidden="true">
            <path
              d="M16.500.5H3L.5 3v67l16 11z"
              fill={i === 0 ? '#7c7c7c' : '#f2f2ec'}
              stroke={i === 0 ? '#606060' : '#707070'}
            />
            {i === 0 && <path d="M7 62l4 4-4 4z" fill="#fff" />}
          </svg>
          <span className="relative [writing-mode:vertical-rl]">{label}</span>
        </button>
      ))}
    </nav>
  );
}

function Logo() {
  return (
    <div className="absolute top-[9px] right-[5px] flex gap-[3px] text-[#e0561f]">
      <svg width="33" height="28" viewBox="0 0 33 28" aria-hidden="true">
        <rect width="33" height="28" rx="3" fill="#e0561f" />
        <ellipse cx="16.500" cy="14" rx="12.500" ry="11" fill="none" stroke="#fff" strokeWidth="2.500" />
        <path d="M9 8.500h15M16.500 8.500V20M10 14h13M8 19.500h17" stroke="#fff" strokeWidth="2.500" fill="none" />
      </svg>
      <div className="w-[67px] font-[Liberation_Sans,Noto_Sans_CJK_SC,sans-serif] leading-none">
        <p className="flex h-[17px] items-center font-bold">
          <span className="text-[24px] leading-[17px] font-normal">5e</span>
          <span className="text-[19px] leading-[17px]">天资</span>
        </p>
        <p className="text-[16px] leading-[12px]">5etz.com</p>
      </div>
    </div>
  );
}

function App() {
  return (
    <div className="flex h-screen flex-col overflow-hidden bg-[#c8c8c8] font-[Noto_Sans,Noto_Sans_CJK_SC,sans-serif]">
      <header className="relative shrink-0">
        <div className="flex h-[25px] items-center gap-6 bg-gradient-to-b from-[#e4e4e4] via-[#f4f4f4] to-[#c8c8c8] pl-[11px] text-[12px] text-black">
          {menu.map((item) => (
            <button key={item} className={clsx('leading-none', item === '特色功能' && 'text-[#ff0000]')}>
              {item}
            </button>
          ))}
          <p className="pointer-events-none absolute inset-x-0 pl-[248px] text-center text-[15px] leading-none text-[#ff4d0a]">
            博易云-鲁证期货
          </p>
          <div className="mr-[99px] ml-auto flex gap-[3px] text-[14px] leading-none text-[#e00010]">
            <button className="flex h-5 w-[74px] items-center justify-center gap-2 rounded-[3px] border border-[#808080] bg-gradient-to-b from-[#f8f8f8] to-[#c8c8c8]">
              <svg width="12" height="14" aria-hidden="true">
                <path d="M7 0L1 8h4l-2 6 8-9H6l3-5z" fill="#ffa01e" />
              </svg>
              交易
            </button>
            <button className="flex h-5 w-[74px] items-center justify-center gap-1.5 rounded-[3px] border border-[#808080] bg-gradient-to-b from-[#f8f8f8] to-[#c8c8c8]">
              <svg width="18" height="14" aria-hidden="true">
                <ellipse cx="9" cy="6" rx="9" ry="6" fill="#8c8c8c" />
                <path d="M3 10v4l5-3z" fill="#8c8c8c" />
                <path d="M4 5h2v2H4zM8 5h2v2H8zM12 5h2v2h-2z" fill="#fff" />
              </svg>
              论坛
            </button>
          </div>
        </div>
        <div className="flex h-6 items-start border-b-2 border-[#c8c4c2] bg-[#ebebeb]">
          {tools.map((name) => (
            <button key={name} aria-label={name} className="flex h-[22px] w-7 items-center justify-center">
              <ToolIcon name={name} />
            </button>
          ))}
          <button className="relative flex h-[22px] w-7 items-center justify-center text-[12px] text-[#3a8ae0]">
            新
            <span className="absolute top-0.5 right-0.5 h-[6px] w-[6px] rounded-full bg-[#ff1010]" />
          </button>
          <Divider />
          {['报价', '走势'].map((name) => (
            <button key={name} aria-label={name} className="flex h-[22px] w-7 items-center justify-center">
              <ToolIcon name={name} />
            </button>
          ))}
          <PeriodButton text="Tick" tone="red" />
          {['日', '周', '月', '季', 'X'].map((text) => (
            <PeriodButton key={text} text={text} tone="gold" selected={text === '日'} />
          ))}
          {['1', '3', '5', '15', '30', '60', '2hr', '4hr', 'Y'].map((text) => (
            <PeriodButton key={text} text={text} tone="green" />
          ))}
          <Divider />
          <PeriodButton text="画" tone="orange" />
        </div>
        <svg
          className="absolute top-0 right-1"
          width="76"
          height="20"
          fill="none"
          stroke="#a8a8a8"
          aria-hidden="true"
        >
          <path d="M4 10h8M27 3h10v9H27zM30 6h4v3h-4zM58 3l9 9M67 3l-9 9" strokeWidth="2" />
          <path d="M19.500 0v14M46.500 0v14" stroke="#f8f8f8" />
        </svg>
        <Logo />
      </header>
      <div className="flex shrink-0">
        <SideTabs />
        <ChartArea />
        <QuotePanel />
      </div>
      <footer className="flex h-[22px] shrink-0 items-center bg-gradient-to-b from-[#cacaca] to-[#a0a0a0] pl-[9px] text-[13px] whitespace-pre text-[#404040]">
        {indexes.map(([name, value, change, amount]) => (
          <div key={name} className="flex shrink-0 items-center">
            <span className="w-7">{name}</span>
            <span className="w-[68px] text-[#ff1010]">{value}</span>
            <span className="w-[52px] text-[#ff1010]">
              <span className="text-[6px]">▲</span>
              {change}
            </span>
            <span className="w-[70px]">{amount}</span>
            <span className="w-[10px]">|</span>
          </div>
        ))}
        <div className="ml-auto flex items-center gap-2 pr-0.5">
          <span>Delay</span>
          <svg width="28" height="13" fill="none" stroke="#404040" strokeWidth="2" aria-hidden="true">
            <path d="M1 2h10L6 7zM6 7v5M19 12V5M23 12V2" />
          </svg>
          <span>06:07</span>
        </div>
      </footer>
    </div>
  );
}

export default App;
